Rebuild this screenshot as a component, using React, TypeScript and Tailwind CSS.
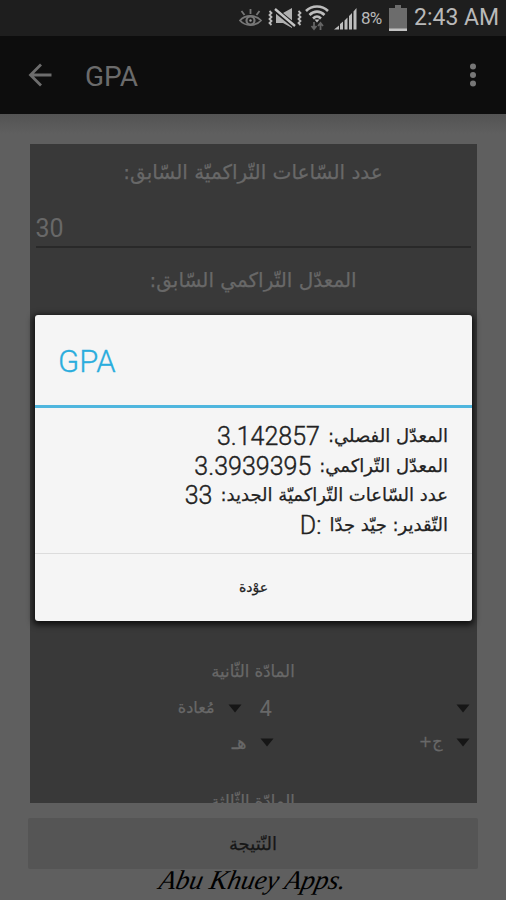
import type { ReactNode } from "react";
import { clsx } from "clsx";

type TextProps = {
  children: ReactNode;
  className?: string;
};

function Arabic({ children, className }: TextProps) {
  return (
    <span
      dir="rtl"
      className={clsx(
        "inline-block whitespace-nowrap font-['DejaVu_Sans',sans-serif] [-webkit-text-stroke:0.25px_currentColor]",
        className
      )}
    >
      {children}
    </span>
  );
}

function Caret() {
  return (
    <svg width="14" height="9" viewBox="0 0 14 9" className="shrink-0">
      <path d="M0.5 0.5h13L7 8.5z" fill="#161616" />
    </svg>
  );
}

function StatusBar() {
  return (
    <div className="flex h-9 shrink-0 items-center bg-[#1e1e1e] pl-[239px] text-[#b9b9b9]">
      <svg width="24" height="20" viewBox="0 0 24 20" fill="none" stroke="#777" strokeWidth="1.8" className="shrink-0">
        <path d="M1 12.500c5-6 16-6 21 0-5 6-16 6-21 0z" />
        <circle cx="11.5" cy="12.5" r="4" strokeWidth="2.200" />
        <circle cx="11.5" cy="12.5" r="1.2" fill="#999" stroke="none" />
        <path d="M2.500 3l3 4M11.500 1v5M20.500 3l-3 4" />
      </svg>
      <svg width="36" height="24" viewBox="0 0 36 24" className="ml-[4px] shrink-0">
        <g fill="none" stroke="#bbb" strokeWidth="1.8">
          <path d="M2.500 5l2 2-2 2 2 2-2 2 2 2-2 2 2 2" />
          <path d="M31.500 5l2 2-2 2 2 2-2 2 2 2-2 2 2 2" />
        </g>
        <path d="M9 7h7l9-5v20l-9-5H9z" fill="#b0b0b0" />
        <path d="M9 4.500l20 16.500" stroke="#1e1e1e" strokeWidth="5" />
        <path d="M8 3l20 17" stroke="#c4c4c4" strokeWidth="2.400" />
      </svg>
      <svg width="25" height="28" viewBox="0 0 25 28" className="ml-[2px] shrink-0" fill="none">
        <g stroke="#bdbdbd" strokeWidth="2.6">
          <path d="M1 7c6-6 16-6 22 0" />
          <path d="M4.5 11c4.500-4.500 10.500-4.500 15 0" />
          <path d="M8 14.500c3-2.700 5-2.700 8 0" />
        </g>
        <path d="M9.500 15.500h5L12 18.500z" fill="#bdbdbd" />
        <path d="M9 18v7M6.500 22L9 25l2.500-3M15.500 26v-7M13 22l2.500-3 2.500 3" stroke="#656565" strokeWidth="1.8" />
      </svg>
      <svg width="23" height="24" viewBox="0 0 23 24" className="ml-[4px] shrink-0" fill="#bdbdbd">
        <path d="M0 23.500l5-4v4zM6 18l3-2.500v8H6zM10.500 14.500l3-3v12h-3zM15 10l3-3v16.500h-3zM19.500 5.500L22.500 2v21.500h-3z" />
      </svg>
      <span className="ml-[4px] w-[22px] shrink-0 whitespace-nowrap font-[Roboto,sans-serif] text-[17px] leading-6 tracking-[-0.8px]">
        8%
      </span>
      <svg width="18" height="28" viewBox="0 0 18 28" className="ml-[6px] shrink-0">
        <path d="M0 4h6V1h6v3h6v23H0z" fill="#6c6c6c" />
        <path d="M0 24.500h18V27H0z" fill="#c2c2c2" />
      </svg>
      <span className="ml-[7px] whitespace-nowrap font-[Roboto,sans-serif] text-[23px] leading-9">
        2:43 AM
      </span>
    </div>
  );
}

function AppBar() {
  return (
    <div className="flex h-[78px] shrink-0 items-center bg-[#0d0d0d] pl-[28px] pr-[29px]">
      <svg width="24" height="24" viewBox="0 0 24 24" fill="none" stroke="#6d6d6d" strokeWidth="2.800">
        <path d="M13 1.500L2.500 12 13 22.500M2.500 12H23.500" />
      </svg>
      <span className="ml-[33px] pt-[4px] font-[Roboto,sans-serif] text-[28px] leading-9 text-[#6b6b6b]">
        GPA
      </span>
      <svg width="8" height="24" viewBox="0 0 8 24" className="ml-auto" fill="#777">
        <circle cx="4" cy="3.500" r="3" />
        <circle cx="4" cy="12" r="3" />
        <circle cx="4" cy="20.500" r="3" />
      </svg>
    </div>
  );
}

function Form() {
  return (
    <div className="mx-auto mt-[30px] flex h-[659px] w-[447px] shrink-0 flex-col overflow-hidden bg-[#393939] text-[#686868]">
      <div className="flex h-[54px] shrink-0 items-center justify-center pt-px">
        <Arabic className="text-[20px]">عدد السّاعات التّراكميّة السّابق:</Arabic>
      </div>
      <div className="mx-[6px] flex h-[50px] shrink-0 items-center border-b-2 border-[#292929] font-[Roboto,sans-serif] text-[25px]">
        <span className="pt-[13px]">30</span>
      </div>
      <div className="flex h-[62px] shrink-0 items-center justify-center pt-px">
        <Arabic className="text-[20px]">المعدّل التّراكمي السّابق:</Arabic>
      </div>
      <div className="mt-[344px] flex h-9 shrink-0 items-center justify-center">
        <Arabic className="text-[16.500px]">المادّة الثّانية</Arabic>
      </div>
      <div className="flex h-[36px] shrink-0 items-center pr-[7px]">
        <div className="flex w-[212px] items-center justify-end gap-[13px]">
          <Arabic className="text-[16px]">مُعادة</Arabic>
          <Caret />
        </div>
        <span className="ml-[18px] font-[Roboto,sans-serif] text-[22px]">4</span>
        <span className="ml-auto">
          <Caret />
        </span>
      </div>
      <div className="flex h-[32px] shrink-0 items-center pr-[7px]">
        <div className="flex w-[244px] items-center justify-end gap-[13px]">
          <Arabic className="text-[18px]">هـ</Arabic>
          <Caret />
        </div>
        <div className="ml-auto flex items-center gap-[13px]">
          <Arabic className="text-[16px]">ج+</Arabic>
          <Caret />
        </div>
      </div>
      <div className="mt-[26px] flex h-9 shrink-0 items-center justify-center">
        <Arabic className="text-[16.500px]">المادّة الثّالثة</Arabic>
      </div>
    </div>
  );
}

type Result = {
  label: string;
  value: string;
};

const results: Result[] = [
  { label: "المعدّل الفصلي:", value: "3.142857" },
  { label: "المعدّل التّراكمي:", value: "3.3939395" },
  { label: "عدد السّاعات التّراكميّة الجديد:", value: "33" },
  { label: "التّقدير: جيّد جدّا", value: ":D" },
];

function ResultDialog() {
  return (
    <div className="absolute left-[35px] top-[315px] flex h-[306px] w-[437px] flex-col rounded-[3px] bg-[#f5f5f5] shadow-[0_2px_6px_2px_rgba(0,0,0,0.75)]">
      <div className="flex h-[93px] items-center border-b-[3px] border-[#4fb6de] pl-[23px] pt-[5px] font-[Roboto,sans-serif] text-[31px] font-light text-[#2aaddd] [-webkit-text-stroke:0.3px_currentColor]">
        GPA
      </div>
      <div dir="rtl" className="flex h-[145px] flex-col pr-[24px] pt-[13px] text-[#222]">
        {results.map((row) => (
          <div key={row.label} className="flex h-[29.500px] items-center gap-[8px]">
            <Arabic className="text-[18px] leading-[25px]">{row.label}</Arabic>
            <span className="pt-[2px] font-[Roboto,sans-serif] text-[25px] font-light leading-[27px] [-webkit-text-stroke:0.4px_currentColor]">
              {row.value}
            </span>
          </div>
        ))}
      </div>
      <button className="flex flex-1 items-center justify-center border-t border-[#dcdcdc] text-[#222]">
        <Arabic className="text-[14px]">عوْدة</Arabic>
      </button>
    </div>
  );
}

export default function App() {
  return (
    <div className="relative flex h-[900px] w-[506px] flex-col overflow-hidden bg-[#5e5e5e]">
      <StatusBar />
      <AppBar />
      <div className="flex flex-1 flex-col bg-linear-to-b from-[#535353] to-[#5f5f5f] to-[20px]">
        <Form />
        <button className="mx-auto mt-[15px] flex h-[51px] w-[450px] shrink-0 items-center justify-center rounded-[2px] bg-[#555] text-[#171717]">
          <Arabic className="text-[18px]">النّتيجة</Arabic>
        </button>
        <div className="flex h-[31px] items-start justify-center overflow-hidden">
          <span className="-mt-[6px] -skew-x-12 whitespace-nowrap font-['Liberation_Serif',serif] text-[27px] italic leading-[34px] text-black">
            Abu Khuey Apps.
          </span>
        </div>
      </div>
      <ResultDialog />
    </div>
  );
}
